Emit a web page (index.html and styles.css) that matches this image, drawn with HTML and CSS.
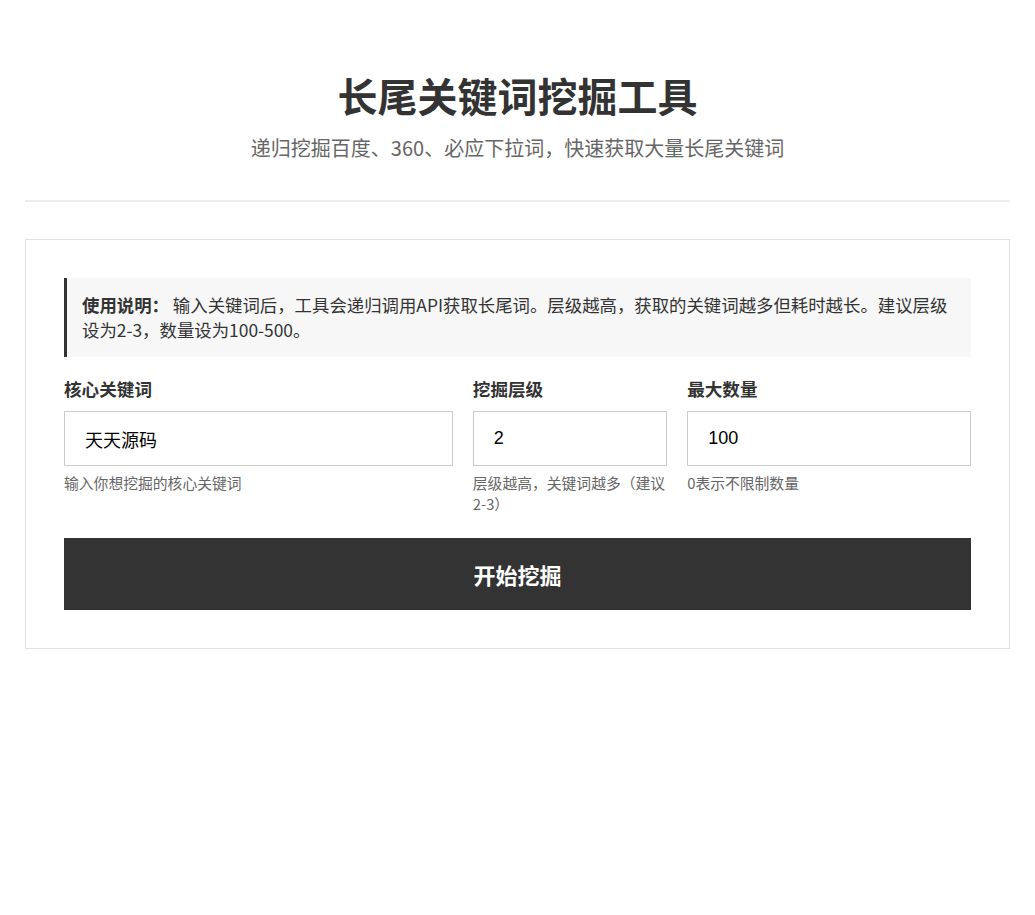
FILE: index.html
```html
<!DOCTYPE html>
<html lang="zh-CN">
<head>
<meta charset="utf-8">
<title>长尾关键词挖掘工具</title>
<link rel="stylesheet" href="styles.css">
</head>
<body>
<div class="page">
  <header class="header">
    <h1 class="title">长尾关键词挖掘工具</h1>
    <p class="subtitle">递归挖掘百度、360、必应下拉词，快速获取大量长尾关键词</p>
  </header>
  <section class="card">
    <div class="notice"><strong>使用说明：</strong> 输入关键词后，工具会递归调用API获取长尾词。层级越高，获取的关键词越多但耗时越长。建议层级设为2-3，数量设为100-500。</div>
    <div class="fields">
      <div class="field">
        <label class="label">核心关键词</label>
        <input class="input" type="text" value="天天源码">
        <div class="hint">输入你想挖掘的核心关键词</div>
      </div>
      <div class="field">
        <label class="label">挖掘层级</label>
        <input class="input" type="text" value="2">
        <div class="hint">层级越高，关键词越多（建议2-3）</div>
      </div>
      <div class="field">
        <label class="label">最大数量</label>
        <input class="input" type="text" value="100">
        <div class="hint">0表示不限制数量</div>
      </div>
    </div>
    <button class="btn" type="button">开始挖掘</button>
  </section>
</div>
</body>
</html>
```

FILE: styles.css
```css
* {
  box-sizing: border-box;
}

html, body {
  margin: 0;
  padding: 0;
  background: #ffffff;
}

body {
  font-family: "Noto Sans CJK SC", "Noto Sans", sans-serif;
  color: #333333;
}

.page {
  padding: 0 25px;
}

.header {
  text-align: center;
  padding-top: 71px;
  padding-bottom: 37px;
  border-bottom: 2px solid #eeeeee;
}

.title {
  margin: 0;
  font-size: 40px;
  line-height: 48px;
  font-weight: 700;
  color: #333333;
}

.subtitle {
  margin: 14px 0 0;
  font-size: 20px;
  line-height: 30px;
  color: #666666;
}

.card {
  margin-top: 37px;
  border: 1px solid #e2e2e2;
  padding: 38px;
}

.notice {
  background: #f7f7f7;
  border-left: 3px solid #333333;
  padding: 15px;
  font-size: 17.4px;
  line-height: 24.6px;
  color: #333333;
}

.notice strong {
  font-weight: 700;
}

.fields {
  display: grid;
  grid-template-columns: 2fr 1fr 1.46fr;
  column-gap: 20px;
  margin-top: 20px;
}

.field {
  display: flex;
  flex-direction: column;
}

.label {
  font-size: 17.6px;
  line-height: 24px;
  font-weight: 700;
  color: #333333;
  margin-bottom: 10px;
}

.input {
  width: 100%;
  height: 55px;
  border: 1px solid #cccccc;
  padding: 0 20px;
  font-family: "Liberation Sans", "Noto Sans CJK SC", sans-serif;
  font-size: 18px;
  color: #000000;
  background: #ffffff;
  outline: none;
  border-radius: 0;
}

.hint {
  margin-top: 6px;
  font-size: 14.8px;
  line-height: 21px;
  color: #666666;
}

.btn {
  display: block;
  width: 100%;
  height: 72px;
  margin-top: 24px;
  border: none;
  background: #333333;
  color: #ffffff;
  font-family: "Noto Sans CJK SC", sans-serif;
  font-size: 22px;
  font-weight: 700;
  cursor: pointer;
}
```
